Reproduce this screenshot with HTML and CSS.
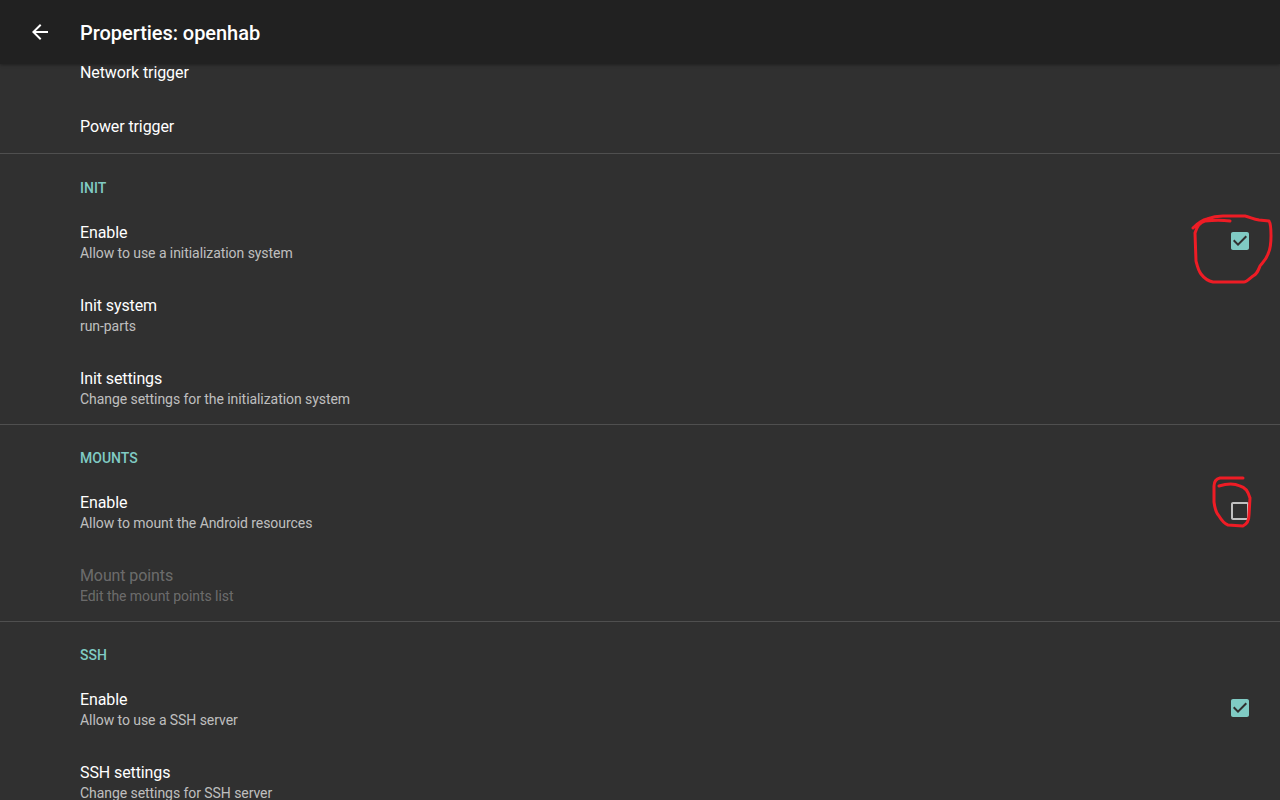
FILE: index.html
```html
<!DOCTYPE html>
<html>
<head>
	<meta charset="utf-8">
	<title>Properties: openhab</title>
	<link rel="stylesheet" href="styles.css">
</head>
<body>
	<header class="toolbar">
		<svg class="back" viewBox="0 0 24 24"><path d="M20 11H7.83l5.59-5.59L12 4l-8 8 8 8 1.41-1.41L7.83 13H20v-2z"/></svg>
		<h1>Properties: openhab</h1>
	</header>
	<div class="list">
		<div class="row single"><div class="title">Network trigger</div></div>
		<div class="row single"><div class="title">Power trigger</div></div>

		<section>
			<h2>INIT</h2>
			<div class="row">
				<div class="text">
					<div class="title">Enable</div>
					<div class="sub">Allow to use a initialization system</div>
				</div>
				<svg class="check on" viewBox="0 0 24 24"><path d="M19 3H5c-1.11 0-2 .9-2 2v14c0 1.1.89 2 2 2h14c1.11 0 2-.9 2-2V5c0-1.11-.89-2-2-2zm-9 14l-5-5 1.41-1.41L10 14.17l7.59-7.59L19 8l-9 9z"/></svg>
			</div>
			<div class="row">
				<div class="text">
					<div class="title">Init system</div>
					<div class="sub">run-parts</div>
				</div>
			</div>
			<div class="row">
				<div class="text">
					<div class="title">Init settings</div>
					<div class="sub">Change settings for the initialization system</div>
				</div>
			</div>
		</section>

		<section>
			<h2>MOUNTS</h2>
			<div class="row">
				<div class="text">
					<div class="title">Enable</div>
					<div class="sub">Allow to mount the Android resources</div>
				</div>
				<svg class="check" viewBox="0 0 24 24"><path d="M19 5v14H5V5h14m0-2H5c-1.1 0-2 .9-2 2v14c0 1.1.9 2 2 2h14c1.1 0 2-.9 2-2V5c0-1.1-.9-2-2-2z"/></svg>
			</div>
			<div class="row disabled">
				<div class="text">
					<div class="title">Mount points</div>
					<div class="sub">Edit the mount points list</div>
				</div>
			</div>
		</section>

		<section>
			<h2>SSH</h2>
			<div class="row">
				<div class="text">
					<div class="title">Enable</div>
					<div class="sub">Allow to use a SSH server</div>
				</div>
				<svg class="check on" viewBox="0 0 24 24"><path d="M19 3H5c-1.11 0-2 .9-2 2v14c0 1.1.89 2 2 2h14c1.11 0 2-.9 2-2V5c0-1.11-.89-2-2-2zm-9 14l-5-5 1.41-1.41L10 14.17l7.59-7.59L19 8l-9 9z"/></svg>
			</div>
			<div class="row">
				<div class="text">
					<div class="title">SSH settings</div>
					<div class="sub">Change settings for SSH server</div>
				</div>
			</div>
		</section>
	</div>

	<!-- red marks drawn by hand on top of the screenshot -->
	<svg class="marks" viewBox="0 0 1280 800">
		<path d="M1193 228 C1197 224 1201 220 1207 219 C1212 217 1216 216 1223 216 L1245 216 C1250 217 1253 219 1259 220 L1269 221 C1271 224 1271 230 1271 236 C1271 244 1270 250 1268 254 C1266 260 1262 263 1260 266 C1258 271 1257 274 1253 276 C1249 279 1247 282 1244 282 L1213 282 C1208 281 1204 278 1201 274 C1198 270 1197 265 1196 261 L1195 233 C1197 226 1200 222 1205 221 C1215 220 1222 220 1230 221"/>
		<path d="M1243 478 L1220 478 C1216 479 1214 482 1214 486 L1214 502 C1215 510 1217 514 1219 516 C1222 521 1225 524 1228 525 L1243 526 C1247 524 1249 520 1249 515 L1250 498 C1248 491 1245 487 1240 486 C1234 483 1228 483 1219 486"/>
	</svg>
</body>
</html>
```

FILE: styles.css
```css
html, body {
	margin: 0;
	padding: 0;
	height: 100%;
	overflow: hidden;
	background-color: #303030;
	color: #fff;
	font-family: Roboto, "Liberation Sans", sans-serif;
}
.toolbar {
	position: relative;
	z-index: 1;
	height: 64px;
	display: flex;
	align-items: center;
	background-color: #212121;
	box-shadow: 0 1px 3px rgba(0, 0, 0, .35);
}
.back {
	width: 24px;
	height: 24px;
	margin: 0 28px;
	fill: #fff;
}
.toolbar h1 {
	margin: 2px 0 0;
	font-size: 20px;
	font-weight: 500;
	letter-spacing: -.05px;
}
.list {
	margin-top: -19px;
}
section {
	border-top: 1px solid #4f4f4f;
}
section + section {
	margin-top: -1px;
}
section h2 {
	margin: 0;
	height: 51px;
	padding: 24px 0 0 80px;
	box-sizing: border-box;
	line-height: 20px;
	font-size: 14px;
	font-weight: 500;
	color: #80cbc4;
}
section + section h2 {
	padding-top: 23px;
}
.row.single + section h2 {
	height: 52px;
}
.row {
	height: 73px;
	display: flex;
	align-items: center;
	justify-content: space-between;
	padding: 0 28px 0 80px;
}
.row.single {
	height: 54px;
}
.title {
	font-size: 16px;
	line-height: 21px;
	letter-spacing: -.1px;
	color: #fff;
}
.sub {
	font-size: 14px;
	line-height: 21px;
	letter-spacing: -.06px;
	color: rgba(255, 255, 255, .7);
}
.disabled .title, .disabled .sub {
	color: rgba(255, 255, 255, .3);
}
.check {
	width: 24px;
	height: 24px;
	margin-bottom: 3px;
	fill: rgba(255, 255, 255, .7);
}
.check.on {
	fill: #80cbc4;
}
.marks {
	position: absolute;
	top: 0;
	left: 0;
	width: 1280px;
	height: 800px;
	fill: none;
	stroke: #ee1c25;
	stroke-width: 3;
	stroke-linecap: round;
	stroke-linejoin: round;
}
```
